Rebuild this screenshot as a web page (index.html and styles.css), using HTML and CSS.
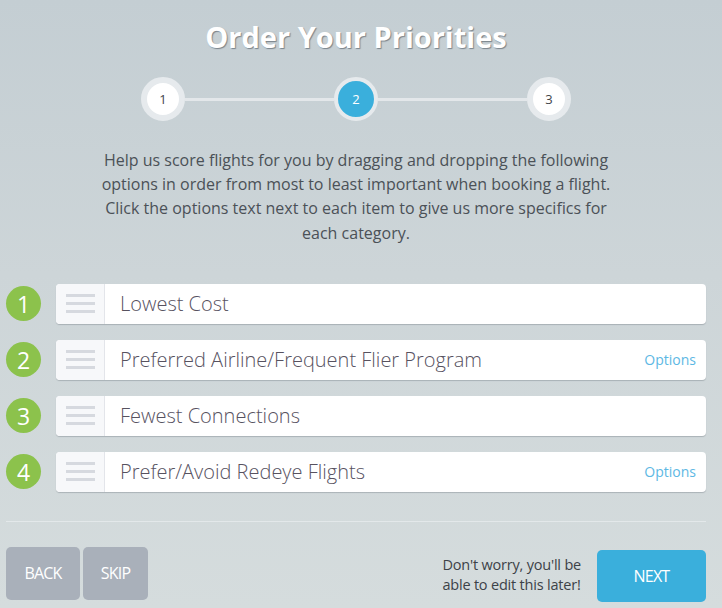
FILE: index.html
```html
<!DOCTYPE html>
<html>
<head>
<meta charset="utf-8">
<link rel="stylesheet" href="styles.css">
</head>
<body>
<div class="page">
  <h1 class="title">Order Your Priorities</h1>
  <div class="stepper">
    <div class="step">1</div>
    <div class="line"></div>
    <div class="step active">2</div>
    <div class="line"></div>
    <div class="step">3</div>
  </div>
  <p class="intro">Help us score flights for you by dragging and dropping the following options in order from most to least important when booking a flight. Click the options text next to each item to give us more specifics for each category.</p>
  <ul class="list">
    <li class="row">
      <span class="num">1</span>
      <div class="card">
        <div class="handle"><i></i><i></i><i></i></div>
        <span class="label">Lowest Cost</span>
      </div>
    </li>
    <li class="row">
      <span class="num">2</span>
      <div class="card">
        <div class="handle"><i></i><i></i><i></i></div>
        <span class="label">Preferred Airline/Frequent Flier Program</span>
        <a class="opts">Options</a>
      </div>
    </li>
    <li class="row">
      <span class="num">3</span>
      <div class="card">
        <div class="handle"><i></i><i></i><i></i></div>
        <span class="label">Fewest Connections</span>
      </div>
    </li>
    <li class="row">
      <span class="num">4</span>
      <div class="card">
        <div class="handle"><i></i><i></i><i></i></div>
        <span class="label">Prefer/Avoid Redeye Flights</span>
        <a class="opts">Options</a>
      </div>
    </li>
  </ul>
  <div class="divider"></div>
  <div class="footer">
    <button class="btn gray back">BACK</button>
    <button class="btn gray skip">SKIP</button>
    <div class="spacer"></div>
    <p class="note">Don't worry, you'll be<br>able to edit this later!</p>
    <button class="btn next">NEXT</button>
  </div>
</div>
</body>
</html>
```
FILE: styles.css
```css
html, body {
  margin: 0;
  padding: 0;
}
body {
  width: 722px;
  height: 608px;
  overflow: hidden;
  background: linear-gradient(180deg, #c4ced3 0%, #cdd5d8 45%, #d5dcdd 100%);
  font-family: "Open Sans", "Liberation Sans", sans-serif;
}
.page {
  padding: 0 16px 0 6px;
}
.title {
  margin: 0;
  padding-top: 17px;
  height: 41px;
  text-align: center;
  color: #fff;
  font-size: 29px;
  font-weight: 700;
  line-height: 40px;
  text-shadow: 1px 1px 1px rgba(60, 70, 80, 0.55);
}
.stepper {
  display: flex;
  align-items: center;
  margin: 19px 0 0 135px;
  width: 430px;
}
.step {
  width: 32px;
  height: 32px;
  border: 6px solid #e6eaed;
  border-radius: 50%;
  background: #fff;
  color: #3f454b;
  font-size: 13px;
  display: flex;
  align-items: center;
  justify-content: center;
  flex: none;
}
.step.active {
  width: 36px;
  height: 36px;
  border-width: 4px;
  background: #3aafdc;
  color: #fff;
}
.line {
  flex: 1;
  height: 3px;
  background: #e3e7ea;
}
.intro {
  margin: 27px auto 0;
  width: 516px;
  text-align: center;
  color: #4b5157;
  font-size: 16px;
  line-height: 24.2px;
}
.list {
  list-style: none;
  margin: 39px 0 0;
  padding: 0;
  display: flex;
  flex-direction: column;
  gap: 16px;
}
.row {
  display: flex;
  align-items: center;
  gap: 15px;
}
.num {
  width: 35px;
  height: 35px;
  border-radius: 50%;
  background: #8cc24c;
  color: #fff;
  font-size: 23px;
  display: flex;
  align-items: center;
  justify-content: center;
  flex: none;
}
.card {
  flex: 1;
  height: 40px;
  background: #fff;
  border-radius: 4px;
  box-shadow: 0 1px 1px rgba(80, 90, 100, 0.3);
  display: flex;
  align-items: center;
  overflow: hidden;
}
.handle {
  width: 49px;
  height: 100%;
  background: #f7f8fa;
  border-right: 1px solid #e3e5ea;
  display: flex;
  flex-direction: column;
  justify-content: center;
  align-items: center;
  gap: 5px;
  flex: none;
  box-sizing: border-box;
}
.handle i {
  display: block;
  width: 29px;
  height: 3px;
  background: #d6d9df;
}
.label {
  margin-left: 15px;
  color: #57525f;
  font-size: 20px;
  font-weight: 300;
  flex: 1;
}
.opts {
  color: #5db8e4;
  font-size: 14px;
  margin-right: 10px;
}
.divider {
  margin-top: 29px;
  height: 1px;
  background: #e3e8ea;
}
.footer {
  display: flex;
  align-items: center;
  margin-top: 23px;
}
.btn {
  border: none;
  color: #fff;
  font-family: "Open Sans", "Liberation Sans", sans-serif;
  font-size: 16px;
  letter-spacing: -0.8px;
  border-radius: 5px;
  cursor: pointer;
  padding: 0;
}
.gray {
  background: #a9b0ba;
  height: 53px;
}
.back {
  width: 74px;
  margin-right: 3px;
}
.skip {
  width: 65px;
}
.spacer {
  flex: 1;
}
.note {
  margin: 3px 16px 0 0;
  color: #3c4248;
  font-size: 14.5px;
  line-height: 20px;
  letter-spacing: -0.2px;
}
.next {
  background: #3aafdc;
  width: 109px;
  height: 52px;
  margin-top: 5px;
}
```
